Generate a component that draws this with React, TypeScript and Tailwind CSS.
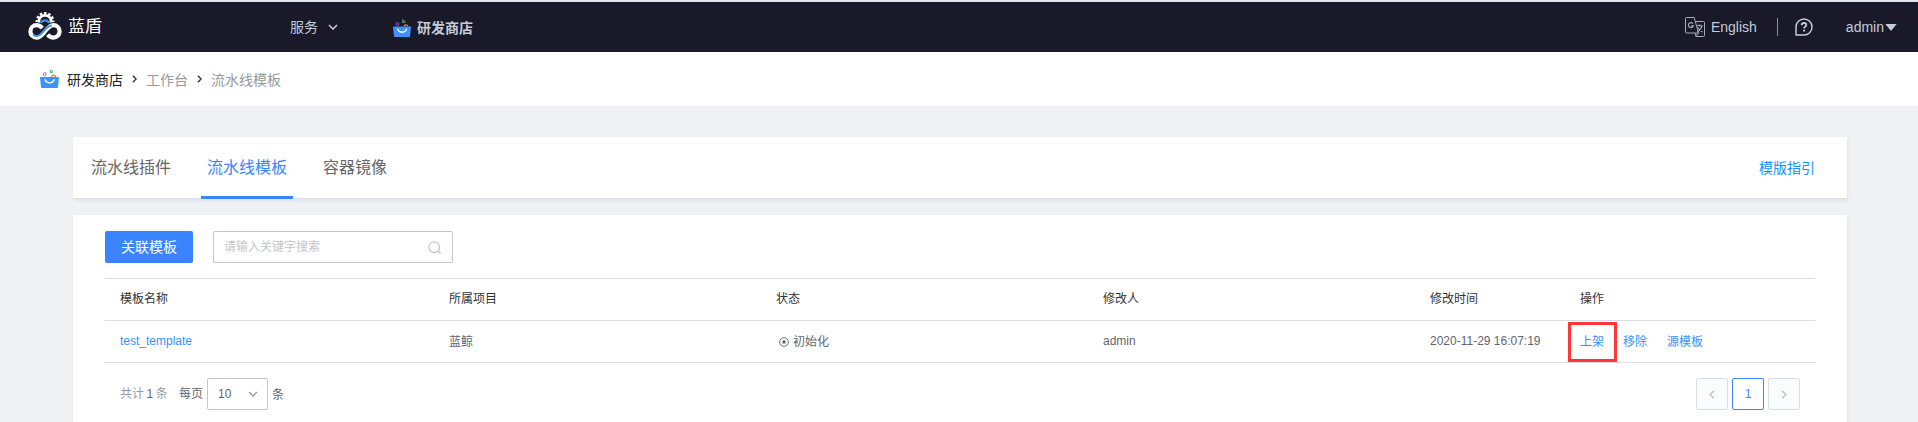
import React from 'react';

function BagIcon({ size }: { size: number }) {
  return (
    <svg width={size} height={size} viewBox="0 0 19 19" fill="none" className="block shrink-0">
      <circle cx="4.7" cy="5.2" r="1.5" stroke="#8d5fd6" strokeWidth="1" />
      <path d="M10.300 3.900V.8l2.800 2.300Z" stroke="#4fb868" strokeWidth="1" strokeLinejoin="round" />
      <path d="M11.700 8a1.900 1.900 0 0 1 3.800 0" stroke="#f07a34" strokeWidth="1.3" />
      <path d="M.5 8h18c.4 0 .5.2.5.5l-1 9.600c-.1.600-.4.900-1 .900H2c-.6 0-.9-.3-1-.9L0 8.500C0 8.200.2 8 .5 8Z" fill="#3f92fb" />
      <path d="M5 10.800c.8 2 2.500 3.100 4.600 3.100s3.800-1.100 4.600-3.100" stroke="#fff" strokeWidth="1.4" strokeLinecap="round" />
    </svg>
  );
}

function Logo() {
  return (
    <svg width="34" height="28" viewBox="0 0 34 28" fill="none" className="block shrink-0">
      <circle cx="17" cy="9.5" r="8.200" stroke="#fff" strokeWidth="2.6" strokeDasharray="2.5 1.794" strokeDashoffset="1.25" />
      <circle cx="17" cy="9.5" r="6.200" stroke="#fff" strokeWidth="2.8" />
      <g stroke="#191929" strokeWidth="6.400">
        <circle cx="8.600" cy="19.400" r="6.200" />
        <circle cx="25.400" cy="19.400" r="6.200" />
      </g>
      <path d="M12 10.600h10L17 20Z" fill="#191929" />
      <path d="M12.900 11a4.500 4.500 0 0 1 8.200 0" stroke="#3f8fe8" strokeWidth="2.4" />
      <path d="M14.300 16.200c-1.600-1.900-3.300-3-5.700-3a6.200 6.200 0 1 0 0 12.400c3.700 0 5.900-3.200 8.400-6.200s4.700-6.200 8.400-6.200a6.200 6.200 0 1 1 0 12.400c-2.400 0-4.100-1.100-5.700-3" stroke="#fff" strokeWidth="4.2" />
      <path d="M5 22.300c1 1.100 2.200 1.800 3.700 1.800 3.400 0 5.400-3.100 7.800-5.900s4.400-4.500 7.300-4.700" stroke="#3f8fe8" strokeWidth="1.9" />
    </svg>
  );
}

function Chevron({ dir, w, h, color, stroke }: { dir: 'down' | 'left' | 'right'; w: number; h: number; color: string; stroke: number }) {
  const d = dir === 'down' ? 'M1 1 5 5 9 1' : dir === 'left' ? 'M5 1 1 5 5 9' : 'M1 1 5 5 1 9';
  return (
    <svg width={w} height={h} viewBox={dir === 'down' ? '0 0 10 6' : '0 0 6 10'} fill="none" className="block shrink-0">
      <path d={d} stroke={color} strokeWidth={stroke} />
    </svg>
  );
}

function Header() {
  return (
    <header className="flex h-[52px] items-center border-t-2 border-[#e3e6ec] bg-[#191929] pr-[21px] pl-7 text-sm text-[#c3cdd7]">
      <div className="flex w-[262px] items-center gap-1.5">
        <span className="-mt-0.5">
          <Logo />
        </span>
        <span className="text-[17px] leading-6 text-white">蓝盾</span>
      </div>
      <div className="flex w-[103px] items-center gap-2.5">
        <span className="leading-5">服务</span>
        <Chevron dir="down" w={10} h={6} color="#c3cdd7" stroke={1.6} />
      </div>
      <div className="flex items-center gap-1.5 pt-px font-bold">
        <BagIcon size={18} />
        <span className="leading-5">研发商店</span>
      </div>
      <div className="ml-auto flex items-center">
        <svg width="20" height="20" viewBox="0 0 20 20" fill="none" stroke="#a3acb8" className="mr-1.5 block">
          <path d="M.5 1.500a1 1 0 0 1 1-1h7.700L13.500 16H1.500a1 1 0 0 1-1-1Z" />
          <path d="M10.600 4.500h7.900a1 1 0 0 1 1 1v13a1 1 0 0 1-1 1h-7.400L10 16.200M11 19.300l2.500-3.300" />
          <path d="M8 6.700a2.500 2.500 0 1 0 .3 2.100H6.200" strokeWidth="1.2" />
          <path d="M11.700 8.700h6M14.700 7.200v1.500M17 8.700c-.6 2.800-2.500 5-4.800 6.300M12.800 10.500c1 2 2.500 3.600 4.700 4.500" strokeWidth="1.1" />
        </svg>
        <span className="leading-5">English</span>
        <span className="ml-5 h-[18px] w-px bg-[#8a8f9a]" />
        <svg width="18" height="18" viewBox="0 0 18 18" fill="none" stroke="#c3cdd7" className="mr-[33px] ml-[17px] block">
          <path d="M1 17V9a8 8 0 1 1 8 8Z" strokeWidth="1.5" strokeLinejoin="round" />
          <path d="M6.700 7.200c0-1.300 1-2.200 2.300-2.200s2.300.8 2.300 2c0 1.600-2.200 1.700-2.200 3.500" strokeWidth="1.8" />
          <path d="M9.100 11.700v1.800" strokeWidth="1.9" />
        </svg>
        <span className="leading-5">admin</span>
        <svg width="12" height="7" viewBox="0 0 12 7" className="ml-px block">
          <path d="M.3 0h11.400L6 7Z" fill="#c3cdd7" />
        </svg>
      </div>
    </header>
  );
}

function Breadcrumb() {
  return (
    <nav className="flex h-[55px] items-center border-b border-[#e9ebf0] bg-white pt-px pl-[40px] text-sm leading-5 text-[#999]">
      <span className="mr-2 -mt-0.5">
        <BagIcon size={19} />
      </span>
      <span className="mr-[9px] text-[#222]">研发商店</span>
      <span className="-mt-0.5">
        <Chevron dir="right" w={5} h={8} color="#333" stroke={1.8} />
      </span>
      <span className="mr-[9px] ml-[9px]">工作台</span>
      <span className="-mt-0.5">
        <Chevron dir="right" w={5} h={8} color="#333" stroke={1.8} />
      </span>
      <span className="ml-[9px]">流水线模板</span>
    </nav>
  );
}

const grid = 'grid grid-cols-[329px_327px_327px_327px_150px_235px] items-center border-b border-[#dcdee5] pl-[15px]';

export default function App() {
  return (
    <div className="h-[422px] overflow-hidden bg-[#f0f1f4] font-['Liberation_Sans','Noto_Sans_CJK_SC',sans-serif] text-xs text-[#63656e]">
      <Header />
      <Breadcrumb />
      <main className="mt-[30px] mr-[71px] ml-[73px]">
        <div className="flex h-[62px] items-stretch border-b border-[#dce0e6] bg-white pr-8 pl-3 text-base text-[#666] shadow-[1px_2px_3px_rgba(0,0,0,0.06)]">
          <div className="flex w-[92px] items-center justify-center">流水线插件</div>
          <div className="-mb-px ml-6 flex w-[92px] items-center justify-center border-b-[3px] border-[#3a84ff] pt-0.5 text-[#3a84ff]">流水线模板</div>
          <div className="ml-6 flex w-[76px] items-center justify-center">容器镜像</div>
          <div className="ml-auto flex items-center text-sm text-[#1592ff]">模版指引</div>
        </div>
        <section className="mt-4 h-[260px] bg-white px-8 pt-4 shadow-[1px_2px_3px_rgba(0,0,0,0.06)]">
          <div className="flex gap-5">
            <button className="h-8 w-[88px] rounded-xs bg-[#3a84ff] text-sm text-white">关联模板</button>
            <div className="flex h-8 w-60 items-center justify-between rounded-xs border border-[#c4c6cc] pr-[11px] pl-2.5 text-[#c4c6cc]">
              <span>请输入关键字搜索</span>
              <svg width="13" height="13" viewBox="0 0 13 13" fill="none" stroke="#c4c6cc" strokeWidth="1.3" className="block">
                <circle cx="6.200" cy="6.200" r="5.400" />
                <path d="m10 10 2.600 2.600" />
              </svg>
            </div>
          </div>
          <div className="mt-[15px] border-t border-[#dcdee5]">
            <div className={grid + ' h-[42px] pb-px text-[#313238]'}>
              <span>模板名称</span>
              <span>所属项目</span>
              <span>状态</span>
              <span>修改人</span>
              <span>修改时间</span>
              <span>操作</span>
            </div>
            <div className={grid + ' h-[42px]'}>
              <span className="pb-0.5 text-[#3a8fff]">test_template</span>
              <span>蓝鲸</span>
              <span className="flex items-center gap-1 pl-[3px]">
                <svg width="10" height="10" viewBox="0 0 10 10" fill="none" className="block">
                  <circle cx="5" cy="5" r="4.400" stroke="#737987" />
                  <circle cx="5" cy="5" r="1.700" fill="#63656e" />
                </svg>
                初始化
              </span>
              <span className="pb-0.5">admin</span>
              <span className="pb-0.5">2020-11-29 16:07:19</span>
              <span className="-ml-3 flex items-center text-[#3a8fff]">
                <span className="-mb-px flex h-10 w-[49px] items-center border-3 border-[#ff3737] pl-[9px]">上架</span>
                <span className="ml-1.5">移除</span>
                <span className="ml-5">源模板</span>
              </span>
            </div>
          </div>
          <div className="mt-[15px] flex h-8 items-center pr-[15px] pl-[15px]">
            <span className="w-[59px] text-[#979ba5]">
              共计<span className="mx-[2.5px] text-[#63656e]">1</span>条
            </span>
            <span>每页</span>
            <div className="mx-1 flex h-8 w-[61px] items-center justify-between rounded-xs border border-[#c4c6cc] pr-[9px] pl-2.5">
              <span>10</span>
              <Chevron dir="down" w={10} h={6} color="#979ba5" stroke={1.4} />
            </div>
            <span className="pt-px">条</span>
            <div className="ml-auto flex gap-1">
              <span className="flex size-8 items-center justify-center rounded-xs border border-[#dcdee5] bg-[#fafbfd]">
                <Chevron dir="left" w={6} h={9} color="#c4c6cc" stroke={1.8} />
              </span>
              <span className="flex size-8 items-center justify-center rounded-xs border border-[#3a84ff] text-[#3a84ff]">1</span>
              <span className="flex size-8 items-center justify-center rounded-xs border border-[#dcdee5] bg-[#fafbfd]">
                <Chevron dir="right" w={6} h={9} color="#c4c6cc" stroke={1.8} />
              </span>
            </div>
          </div>
        </section>
      </main>
    </div>
  );
}
